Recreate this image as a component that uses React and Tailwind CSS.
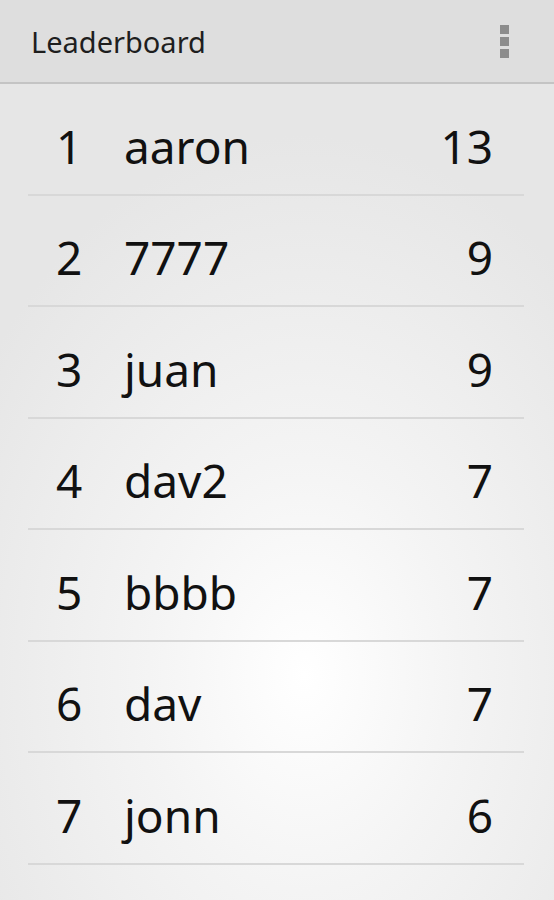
export default function App() {
  const rows = [
    [1, "aaron", 13],
    [2, "7777", 9],
    [3, "juan", 9],
    [4, "dav2", 7],
    [5, "bbbb", 7],
    [6, "dav", 7],
    [7, "jonn", 6],
  ];
  return (
    <div
      className="w-[554px] h-[900px] overflow-hidden flex flex-col bg-[radial-gradient(ellipse_70%_60%_at_55%_75%,#ffffff_0%,#f4f4f4_40%,#e6e6e6_100%)]"
      style={{ fontFamily: '"Noto Sans", "Open Sans", sans-serif' }}
    >
      <div className="h-[84px] shrink-0 bg-[#dedede] flex items-center justify-between pl-[31px] pr-[45px] border-b-2 border-[#c4c4c4]">
        <span className="text-[29px] text-[#1e1e1e] leading-none">Leaderboard</span>
        <div className="flex flex-col gap-[3px]">
          <div className="w-[9px] h-[9px] bg-[#8c8c8c]" />
          <div className="w-[9px] h-[9px] bg-[#8c8c8c]" />
          <div className="w-[9px] h-[9px] bg-[#8c8c8c]" />
        </div>
      </div>
      <div className="flex flex-col">
        {rows.map(([n, name, score]) => (
          <div key={n} className="ml-[28px] mr-[30px] h-[111.5px] pt-[14px] border-b-2 border-[#d8d8d8] flex items-center text-[46px] text-[#111] leading-none">
            <span className="w-[96px] pl-[28px]">{n}</span>
            <span className="flex-1">{name}</span>
            <span className="pr-[31px]">{score}</span>
          </div>
        ))}
      </div>
    </div>
  );
}
